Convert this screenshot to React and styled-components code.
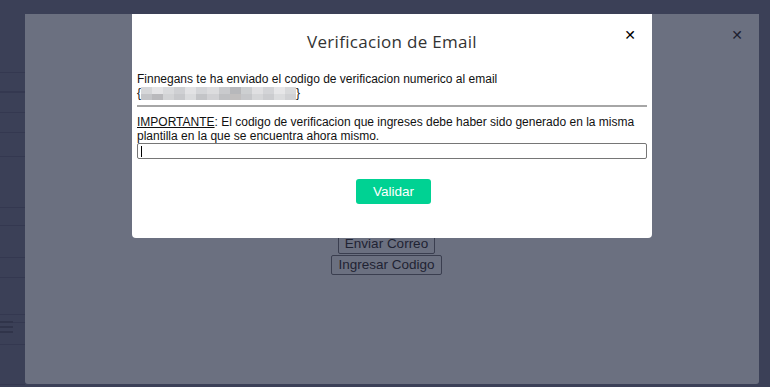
import React from "react";
import styled, { createGlobalStyle } from "styled-components";

const GlobalStyle = createGlobalStyle`
  html, body {
    margin: 0;
    padding: 0;
    background: #3b4057;
  }
  * { box-sizing: border-box; }
`;

const blurCells = [
  ["#d6d7d9", "#e4e4e6", "#d9dadc", "#cfd0d3", "#e2e2e4", "#d4d5d8", "#dcdcde", "#c9cacd", "#b7b8bb", "#cdcfd1", "#e0e0e2", "#d3d4d7", "#e6e6e8", "#d8d9db"],
  ["#c4c5c8", "#b9b9bc", "#d2d3d5", "#c7c8cb", "#dadbdd", "#c3c4c7", "#d1d1d4", "#bfc0c3", "#c1bfbf", "#c6c7ca", "#d5d6d8", "#cbcccf", "#dbdcde", "#d0d1d4"],
];

const sideRows = [13, 19, 1, 20, 20, 24, 51, 18, 32, 20, 37, 8, 22, 40];

const App = () => {
  return (
    <>
      <GlobalStyle />
      <Page>
        <Sidebar>
          {sideRows.map((h, i) => (
            <SideRow key={i} style={{ height: h }} />
          ))}
          <ListIcon>
            <span /><span /><span />
          </ListIcon>
        </Sidebar>
        <Panel>
          <PanelClose>✕</PanelClose>
          <Actions>
            <GhostButton>Enviar Correo</GhostButton>
            <GhostButton>Ingresar Codigo</GhostButton>
          </Actions>
          <Modal>
            <ModalHeader>
              <Title>Verificacion de Email</Title>
              <Close>✕</Close>
            </ModalHeader>
            <ModalBody>
              <Text>
                Finnegans te ha enviado el codigo de verificacion numerico al email
                <br />
                {"{"}
                <Blur>
                  {blurCells.map((row, r) => (
                    <BlurRow key={r}>
                      {row.map((c, i) => (
                        <BlurCell key={i} $color={c} />
                      ))}
                    </BlurRow>
                  ))}
                </Blur>
                {"}"}
              </Text>
              <Rule />
              <Text>
                <Strong>IMPORTANTE</Strong>: El codigo de verificacion que ingreses debe haber sido generado en la misma
                plantilla en la que se encuentra ahora mismo.
              </Text>
              <InputWrap>
                <CodeInput />
                <Caret />
              </InputWrap>
              <Submit>Validar</Submit>
            </ModalBody>
          </Modal>
        </Panel>
      </Page>
    </>
  );
};

export default App;

const Page = styled.div`
  width: 770px;
  height: 387px;
  display: flex;
  overflow: hidden;
  background: #3b4057;
`;

const Sidebar = styled.div`
  width: 25px;
  flex-shrink: 0;
  padding-top: 60px;
  position: relative;
`;

const SideRow = styled.div`
  border-bottom: 1px solid #343850;
`;

const ListIcon = styled.div`
  position: absolute;
  left: 0;
  top: 321px;
  display: flex;
  flex-direction: column;
  gap: 3px;
  span {
    display: block;
    width: 13px;
    height: 2px;
    background: #30344a;
  }
`;

const Panel = styled.div`
  position: relative;
  margin-top: 14px;
  width: 734px;
  height: 370px;
  background: #6b7080;
  border-radius: 0 0 3px 3px;
`;

const PanelClose = styled.div`
  position: absolute;
  top: 13px;
  right: 16px;
  font-family: "DejaVu Sans", sans-serif;
  font-size: 14px;
  font-weight: bold;
  color: #1e2130;
`;

const Actions = styled.div`
  padding-top: 220px;
  padding-right: 11px;
  display: flex;
  flex-direction: column;
  align-items: center;
  gap: 1px;
`;

const GhostButton = styled.button`
  font-family: "Liberation Sans", Arial, sans-serif;
  font-size: 13.5px;
  color: #1f2333;
  background: #6b7080;
  border: 1px solid #3a3e4f;
  border-radius: 2px;
  padding: 1px 6px;
  line-height: 16px;
`;

const Modal = styled.div`
  position: absolute;
  top: 0;
  left: 107px;
  width: 520px;
  height: 224px;
  background: #ffffff;
  border-radius: 0 0 4px 4px;
`;

const ModalHeader = styled.div`
  position: relative;
  height: 58px;
  display: flex;
  align-items: center;
  justify-content: center;
  padding-bottom: 3px;
`;

const Title = styled.h4`
  margin: 0;
  font-family: "Open Sans", sans-serif;
  font-weight: 400;
  font-size: 17px;
  letter-spacing: 0.3px;
  color: #333;
`;

const Close = styled.div`
  position: absolute;
  top: 13px;
  right: 16px;
  font-family: "DejaVu Sans", sans-serif;
  font-size: 14px;
  font-weight: bold;
  color: #000;
`;

const ModalBody = styled.div`
  padding: 0 5px;
  display: flex;
  flex-direction: column;
`;

const Text = styled.div`
  font-family: "Liberation Sans", Arial, sans-serif;
  font-size: 12px;
  line-height: 14px;
  color: #111;
`;

const Strong = styled.span`
  text-decoration: underline;
`;

const Blur = styled.span`
  display: inline-flex;
  flex-direction: column;
  vertical-align: top;
  margin-top: 1px;
  width: 155px;
  height: 13px;
`;

const BlurRow = styled.span`
  display: flex;
  flex: 1;
`;

const BlurCell = styled.span`
  flex: 1;
  background: ${(p) => p.$color};
`;

const Rule = styled.hr`
  margin: 5px 0 8px;
  border: none;
  border-top: 2px solid #a6a6a6;
`;

const InputWrap = styled.div`
  position: relative;
  height: 16px;
`;

const CodeInput = styled.input`
  display: block;
  width: 510px;
  height: 16px;
  border: 1px solid #767676;
  border-radius: 2px;
  padding: 0 3px;
  font-size: 12px;
  outline: none;
`;

const Caret = styled.span`
  position: absolute;
  left: 4px;
  top: 3px;
  width: 1px;
  height: 11px;
  background: #000;
`;

const Submit = styled.button`
  align-self: center;
  margin: 20px 0 0 3px;
  width: 75px;
  height: 25px;
  background: #00d293;
  color: #ffffff;
  border: none;
  border-radius: 3px;
  font-family: "Liberation Sans", Arial, sans-serif;
  font-size: 13.5px;
`;
